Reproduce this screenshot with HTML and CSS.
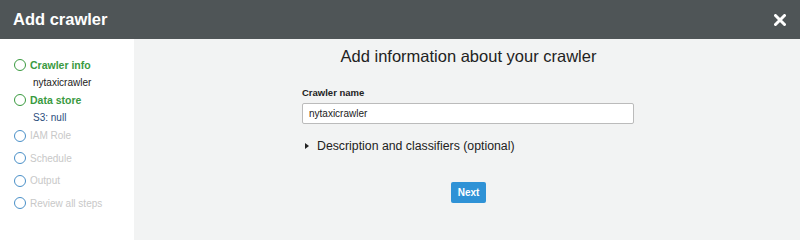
FILE: index.html
```html
<!DOCTYPE html>
<html lang="en">
<head>
    <meta charset="UTF-8">
    <title>Add crawler</title>
    <link rel="stylesheet" href="styles.css">
</head>
<body>
    <div class="header">
        <h1>Add crawler</h1>
        <svg class="close" width="12" height="12" viewBox="0 0 12 12">
            <path d="M1.5 1.5 L10.5 10.5 M10.5 1.5 L1.5 10.5" stroke="#fff" stroke-width="3" stroke-linecap="round"/>
        </svg>
    </div>
    <div class="wizard">
        <ul class="steps">
            <li class="step done"><span class="dot"></span>Crawler info</li>
            <li class="sub">nytaxicrawler</li>
            <li class="step done"><span class="dot"></span>Data store</li>
            <li class="sub link">S3: null</li>
            <li class="step"><span class="dot"></span>IAM Role</li>
            <li class="step"><span class="dot"></span>Schedule</li>
            <li class="step"><span class="dot"></span>Output</li>
            <li class="step"><span class="dot"></span>Review all steps</li>
        </ul>
        <div class="content">
            <h2>Add information about your crawler</h2>
            <form class="form">
                <label for="crawler_name">Crawler name</label>
                <input type="text" id="crawler_name" value="nytaxicrawler">
                <div class="expander"><span class="caret"></span>Description and classifiers (optional)</div>
                <div class="actions">
                    <button type="button" class="btn">Next</button>
                </div>
            </form>
        </div>
    </div>
</body>
</html>
```

FILE: styles.css
```css
body {
    margin: 0;
    font-family: "Liberation Sans", Arial, sans-serif;
    color: #333;
    height: 240px;
    display: flex;
    flex-direction: column;
}
.header {
    height: 39px;
    background: #4f5557;
    display: flex;
    align-items: center;
    justify-content: space-between;
    padding: 0 14px 0 13px;
}
.header h1 {
    margin: 0;
    color: #fff;
    font-size: 16.5px;
    font-weight: bold;
}
.wizard {
    flex: 1;
    display: flex;
}
.steps {
    width: 134px;
    margin: 0;
    padding: 17px 0 0 14px;
    box-sizing: border-box;
    list-style: none;
    background: #fff;
    font-size: 10px;
}
.step {
    display: flex;
    align-items: center;
    height: 17px;
    margin-bottom: 5.5px;
    color: #c8c8c8;
}
.step .dot {
    width: 10px;
    height: 10px;
    border: 1.5px solid #4a90c8;
    border-radius: 50%;
    margin-right: 4px;
}
.step.done {
    color: #3a9a3f;
    font-weight: bold;
    font-size: 10.5px;
}
.step.done .dot {
    border-color: #3a9a3f;
}
.sub {
    padding-left: 19px;
    height: 17px;
    line-height: 17px;
    margin-top: -5px;
    margin-bottom: 1px;
    color: #222;
}
.sub.link {
    color: #2b4d7c;
}
.content {
    flex: 1;
    background: #f2f3f3;
    display: flex;
    flex-direction: column;
    align-items: center;
    padding-top: 7px;
}
.content h2 {
    margin: 0 0 0 3px;
    font-size: 16.5px;
    font-weight: normal;
    line-height: 20px;
    color: #222;
}
.form {
    width: 332px;
    margin-top: 21px;
    margin-left: 2px;
}
label {
    display: block;
    font-size: 9.5px;
    font-weight: bold;
    color: #222;
    margin-bottom: 5px;
}
input[type="text"] {
    display: block;
    width: 100%;
    height: 21px;
    box-sizing: border-box;
    border: 1px solid #bbb;
    border-radius: 2px;
    padding: 0 6px;
    font-family: inherit;
    font-size: 10px;
    color: #222;
    background: #fff;
}
.expander {
    display: flex;
    align-items: center;
    margin-top: 15px;
    font-size: 12.3px;
    color: #222;
}
.caret {
    width: 0;
    height: 0;
    border-left: 4px solid #222;
    border-top: 3.5px solid transparent;
    border-bottom: 3.5px solid transparent;
    margin: 0 8px 0 3px;
}
.actions {
    display: flex;
    justify-content: center;
    margin-top: 29px;
}
.btn {
    width: 35px;
    height: 21px;
    padding: 0;
    border: 0;
    border-radius: 2px;
    background: #2f92d6;
    color: #fff;
    font-family: inherit;
    font-size: 10px;
    font-weight: bold;
    margin-left: 1px;
}
```
